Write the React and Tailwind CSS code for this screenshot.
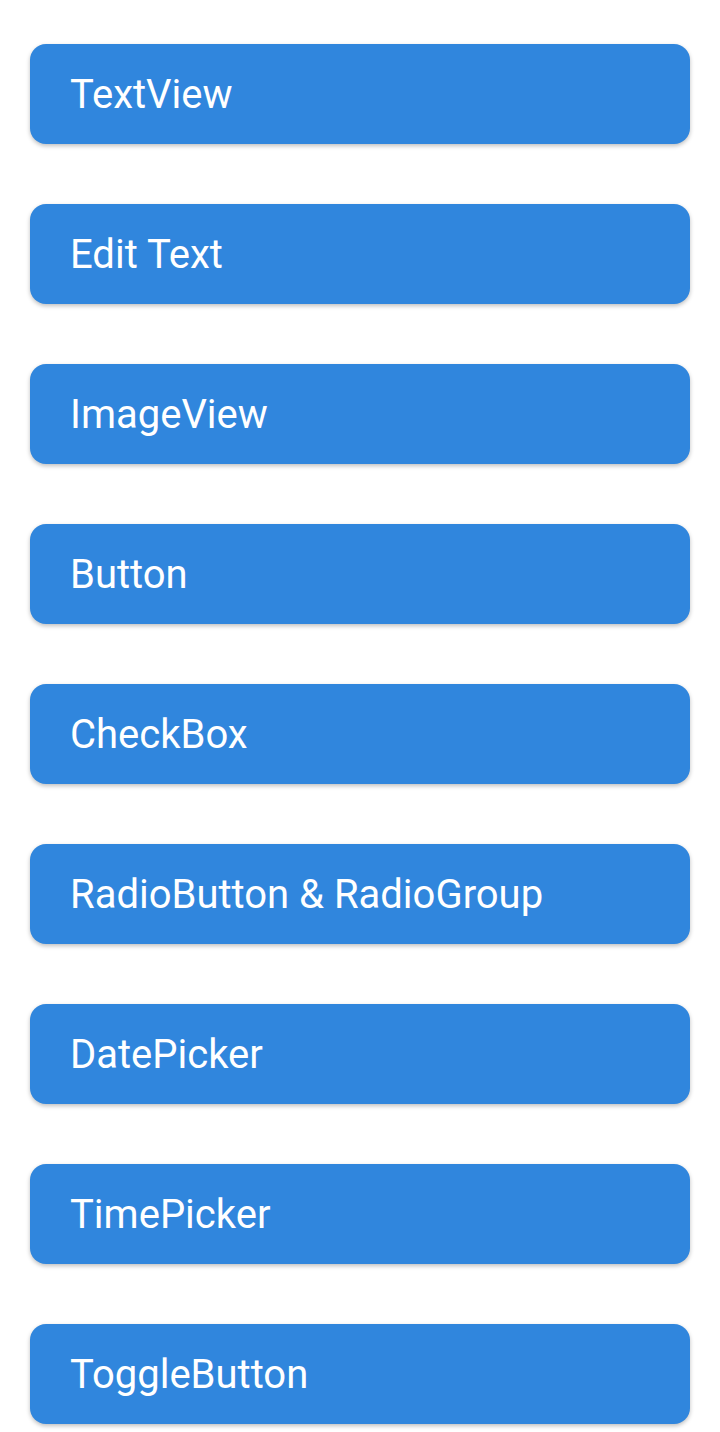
import React from 'react';

const items = [
  'TextView',
  'Edit Text',
  'ImageView',
  'Button',
  'CheckBox',
  'RadioButton & RadioGroup',
  'DatePicker',
  'TimePicker',
  'ToggleButton',
];

const App = () => {
  return (
    <div className="min-h-screen bg-white px-[30px] pt-[44px] font-['Roboto','Liberation_Sans',sans-serif]">
      <div className="flex flex-col gap-[60px]">
        {items.map((label) => (
          <button
            key={label}
            className="flex h-[100px] w-full items-center rounded-[16px] bg-[#3086dd] pl-[40px] pt-[2px] text-left text-[40px] leading-none text-white shadow-[0_2px_4px_rgba(0,0,0,0.25)]"
          >
            {label}
          </button>
        ))}
      </div>
    </div>
  );
};

export default App;
